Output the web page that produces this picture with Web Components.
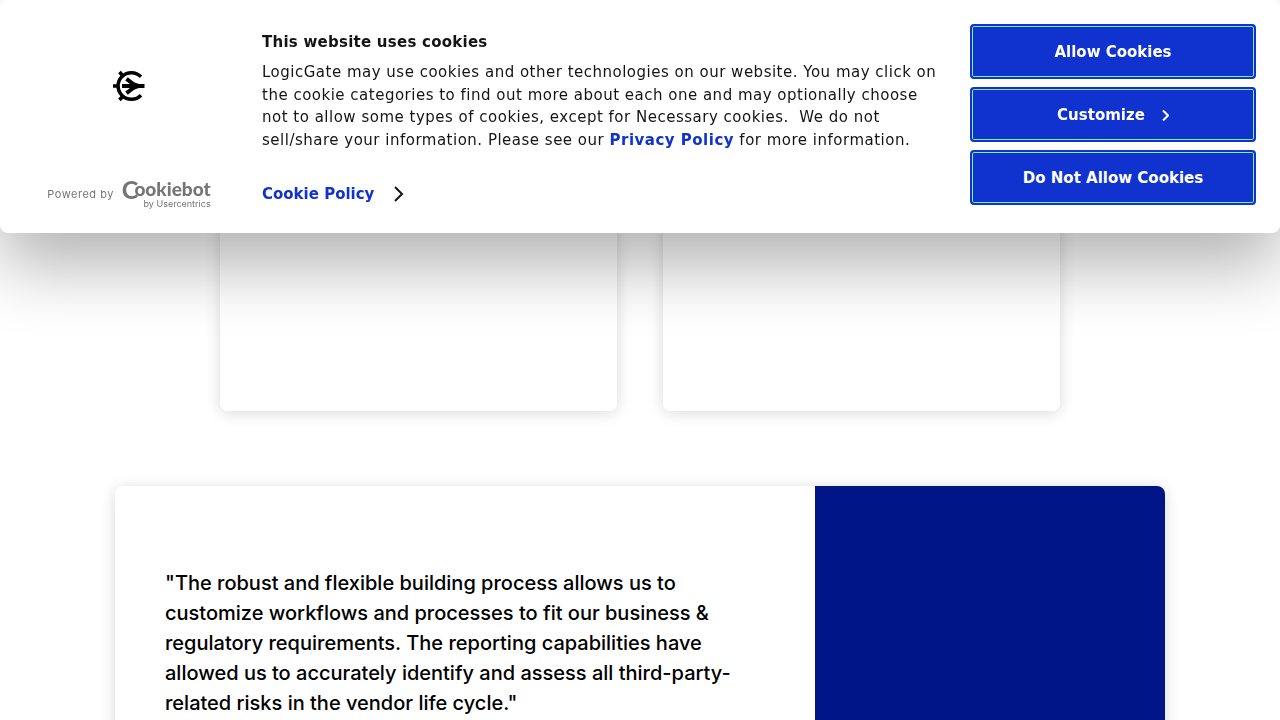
<!DOCTYPE html>
<html lang="en">
<head>
<meta charset="utf-8">
<title>LogicGate</title>
<style>
  html, body { height: 100%; margin: 0; }
  body { background: #fff; overflow: hidden; font-family: Inter, sans-serif; }
</style>
</head>
<body>
<lg-page>
  <lg-card-row>
    <lg-card></lg-card>
    <lg-card></lg-card>
  </lg-card-row>
  <lg-quote>"The robust and flexible building process allows us to customize workflows and processes to fit our business &amp; regulatory requirements. The reporting capabilities have allowed us to accurately identify and assess all third-party-related risks in the vendor life cycle."</lg-quote>
</lg-page>
<cookie-dialog>
  <cookie-brand slot="brand"></cookie-brand>
  <cookie-text slot="text"></cookie-text>
  <cookie-button slot="actions">Allow Cookies</cookie-button>
  <cookie-button slot="actions" arrow>Customize</cookie-button>
  <cookie-button slot="actions">Do Not Allow Cookies</cookie-button>
</cookie-dialog>
<script>
  const define = (name, html) => {
    const template = document.createElement('template');
    template.innerHTML = html;
    customElements.define(name, class extends HTMLElement {
      constructor() {
        super();
        this.attachShadow({ mode: 'open' }).append(template.content.cloneNode(true));
      }
    });
  };

  define('lg-page', `
    <style>
      :host { display: block; height: 100%; overflow: hidden; }
      main { display: flex; flex-direction: column; align-items: center; gap: 75px; }
    </style>
    <main><slot></slot></main>`);

  define('lg-card-row', `
    <style>
      :host { display: grid; grid-template-columns: 1fr 1fr; gap: 46px; width: 100%; max-width: 840px; }
    </style>
    <slot></slot>`);

  define('lg-card', `
    <style>
      :host { display: block; box-sizing: border-box; min-height: 411px; background: #fff;
        border-radius: 8px; box-shadow: 0 2px 15px rgba(0, 0, 0, .15); }
    </style>
    <slot></slot>`);

  define('lg-quote', `
    <style>
      :host { display: grid; grid-template-columns: 2fr 1fr; width: 100%; max-width: 1050px; background: #fff;
        border-radius: 8px; box-shadow: 0 2px 15px rgba(0, 0, 0, .15); overflow: hidden; }
      blockquote { margin: 0; padding: 82px 80px 80px 50px; font: 500 20px/30px Inter, sans-serif; color: #000; }
      aside { background: #001588; }
    </style>
    <blockquote><slot></slot></blockquote>
    <aside></aside>`);

  define('cookie-dialog', `
    <style>
      :host { display: block; position: fixed; top: 0; left: 0; right: 0; z-index: 10;
        font-family: "DejaVu Sans", sans-serif; font-size: 15px; color: #141414; }
      section { display: grid; grid-template-columns: 210px 1fr 286px; gap: 28px; padding: 24px 24px 25px;
        background: #fff; border-radius: 8px; box-shadow: 0 32px 68px rgba(0, 0, 0, .3); }
      .actions { display: flex; flex-direction: column; gap: 8px; padding-bottom: 3px; }
    </style>
    <section role="dialog" aria-label="This website uses cookies">
      <slot name="brand"></slot>
      <slot name="text"></slot>
      <div class="actions"><slot name="actions"></slot></div>
    </section>`);

  define('cookie-brand', `
    <style>
      :host { display: flex; flex-direction: column; justify-content: space-between; align-items: center;
        padding-top: 46px; font-family: Inter, sans-serif; color: #757575; }
      svg { display: block; }
      a { display: flex; align-items: center; gap: 8px; color: inherit; text-decoration: none; }
      .powered { font-size: 11px; line-height: 16px; letter-spacing: .5px; }
      .mark { display: grid; justify-items: end; }
      .word { display: flex; align-items: center; font: 900 19px/18px Lato, sans-serif; }
      .word b { margin-right: -4px; font-size: 25px; line-height: 20px; font-weight: 700; }
      .by { font-size: 9px; line-height: 9px; }
    </style>
    <svg width="32" height="32" viewBox="0 0 32 32" role="img" aria-label="LogicGate" fill="none" stroke="#000" stroke-width="3.500">
      <path d="M28 6.800A13.300 13.300 0 1 0 28 25.200"/>
      <path d="M0 16h5M6.500 2l3 3.500M6.500 30l3-3.500"/>
      <path d="M9 16h22" stroke-width="4"/>
      <path d="M13.500 8.800l8 6.200M13.500 23.200l8-6.200" stroke-width="4"/>
      <path d="M20 12L26 14H31.500V18H26L20 20z" fill="#000" stroke="none"/>
    </svg>
    <a href="#"><span class="powered">Powered by</span>
      <span class="mark"><span class="word"><b>C</b>ookiebot</span><span class="by">by Usercentrics</span></span></a>`);

  define('cookie-text', `
    <style>
      :host { display: block; padding-top: 6px; }
      h2 { margin: 0; font-size: 15px; line-height: 24px; letter-spacing: .25px; }
      p { margin: 7px 0 0; line-height: 1.5; letter-spacing: .5px; }
      a { color: #1032cf; font-weight: 700; text-decoration: none; }
      .policy { display: flex; align-items: center; gap: 20px; width: max-content; margin-top: 31px; line-height: 24px; }
      svg { display: block; }
    </style>
    <h2>This website uses cookies</h2>
    <p>LogicGate may use cookies and other technologies on our website. You may click on the cookie categories to find out more about each one and may optionally choose not to allow some types of cookies, except for Necessary cookies.&nbsp; We do not sell/share your information. Please see our <a href="#">Privacy Policy</a> for more information.</p>
    <a class="policy" href="#">Cookie Policy
      <svg width="10" height="16" viewBox="0 0 10 16" fill="none" stroke="#141414" stroke-width="2"><path d="M1 1l7 7-7 7"/></svg></a>`);

  define('cookie-button', `
    <style>
      :host { display: block; }
      button { display: flex; align-items: center; justify-content: center; gap: 17px; width: 100%; height: 55px;
        padding: 0; border: 2px solid #1032cf; border-radius: 4px; background: #1032cf; color: #fff;
        box-shadow: inset 0 0 0 1px #7df59a; font: 700 15px/24px "DejaVu Sans", sans-serif; }
      svg { display: none; }
      :host([arrow]) svg { display: block; }
    </style>
    <button type="button"><slot></slot>
      <svg width="7" height="13" viewBox="0 0 7 13" fill="none" stroke="#fff" stroke-width="2"><path d="M1 2.500l5 5-5 5"/></svg></button>`);
</script>
</body>
</html>
